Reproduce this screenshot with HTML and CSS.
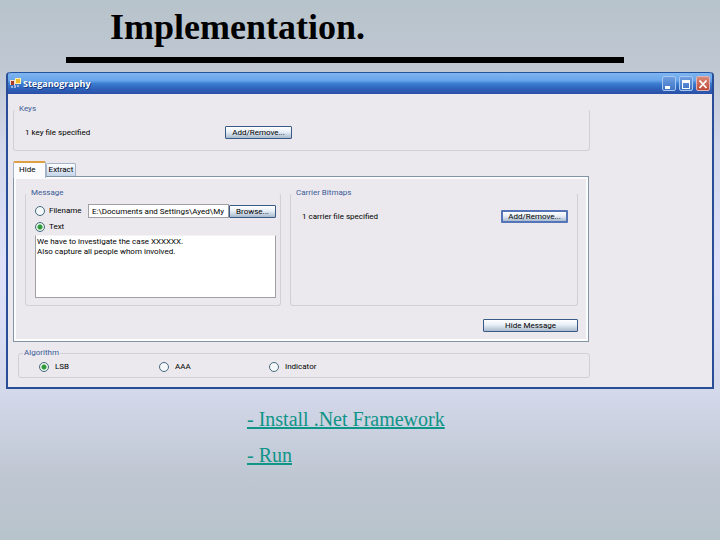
FILE: index.html
```
<!DOCTYPE html>
<html lang="en">
<head>
    <meta charset="UTF-8">
    <meta name="viewport" content="width=device-width, initial-scale=1.0">
    <title>Implementation</title>
    <link rel="stylesheet" href="styles.css">
</head>
<body>
    <header class="slide-header">
        <h1>Implementation.</h1>
        <hr class="rule">
    </header>

    <main>
        <section class="window">
            <div class="title-bar">
                <svg class="app-icon" viewBox="0 0 11 11" width="11" height="11" aria-hidden="true">
                    <rect x="0" y="2" width="5" height="5" fill="#f3d9d0"/>
                    <rect x="1" y="3" width="3" height="4" fill="#a83a2c"/>
                    <rect x="5" y="0" width="6" height="6" fill="#fff3b0"/>
                    <rect x="6" y="1" width="4" height="4" fill="#efb92e"/>
                    <path d="M1 8h2v2H1zM4 7h2v3H4zM7 7h2v2H7z" fill="#9fb4e0"/>
                </svg>
                <h2>Steganography</h2>
                <div class="window-buttons">
                    <button type="button" class="win-btn" aria-label="Minimize">
                        <svg viewBox="0 0 14 14" width="14" height="14"><path d="M3 9h5v3H3z" fill="#fff"/></svg>
                    </button>
                    <button type="button" class="win-btn" aria-label="Maximize">
                        <svg viewBox="0 0 14 14" width="14" height="14"><path fill-rule="evenodd" d="M3 3h8v9H3zM4 6v5h6V6z" fill="#fff"/></svg>
                    </button>
                    <button type="button" class="win-btn close-btn" aria-label="Close">
                        <svg viewBox="0 0 14 14" width="14" height="14"><path d="M3.500 3.500l7 7.500M10.500 3.500l-7 7.500" stroke="#fff" stroke-width="1.800" fill="none"/></svg>
                    </button>
                </div>
            </div>

            <form class="form">
                <fieldset class="group">
                    <legend>Keys</legend>
                    <div class="row keys">
                        <span>1 key file specified</span>
                        <button type="button" class="btn">Add/Remove...</button>
                    </div>
                </fieldset>

                <div class="tabs">
                    <button type="button" class="tab active">Hide</button>
                    <button type="button" class="tab">Extract</button>
                </div>

                <div class="panel">
                    <div class="columns">
                        <fieldset class="group">
                            <legend>Message</legend>
                            <div class="message">
                                <div class="file-row">
                                    <input type="radio" name="source" id="sourceFile">
                                    <label for="sourceFile">Filename</label>
                                    <input type="text" class="path" aria-label="Filename" value="E:\Documents and Settings\Ayed\My Documents">
                                    <button type="button" class="btn">Browse...</button>
                                </div>
                                <div class="text-row">
                                    <input type="radio" name="source" id="sourceText" checked>
                                    <label for="sourceText">Text</label>
                                </div>
                                <textarea class="text" aria-label="Message text">We have to investigate the case XXXXXX.
Also capture all people whom involved.</textarea>
                            </div>
                        </fieldset>

                        <fieldset class="group">
                            <legend>Carrier Bitmaps</legend>
                            <div class="row bitmaps">
                                <span>1 carrier file specified</span>
                                <button type="button" class="btn blue">Add/Remove...</button>
                            </div>
                        </fieldset>
                    </div>
                    <button type="button" class="btn hide-btn">Hide Message</button>
                </div>

                <fieldset class="group algorithm">
                    <legend>Algorithm</legend>
                    <div class="options">
                        <label><input type="radio" name="algorithm" checked>LSB</label>
                        <label><input type="radio" name="algorithm">AAA</label>
                        <label><input type="radio" name="algorithm">Indicator</label>
                    </div>
                </fieldset>
            </form>
        </section>

        <nav class="links">
            <a href="#install">- Install .Net Framework</a>
            <a href="#run">- Run</a>
        </nav>
    </main>
</body>
</html>
```

FILE: styles.css
```
* {
    margin: 0;
    padding: 0;
    box-sizing: border-box;
}

body {
    font-family: "Liberation Serif", "Times New Roman", serif;
    background: linear-gradient(#b7c3cb 0%, #bfc7d2 12%, #d3d8ea 27%, #dfe1fc 50%, #d3d8ea 73%, #bfc7d2 88%, #b7c3cb 100%);
    min-height: 100vh;
    padding: 6px;
}

.slide-header h1 {
    font-size: 36px;
    line-height: 42px;
    padding-left: 104px;
    color: #000;
}

.rule {
    height: 6px;
    margin: 9px 90px 9px 60px;
    border: none;
    background: #000;
}

/* XP style window */
.window {
    border: 2px solid #2a4d98;
    border-top: none;
    border-radius: 4px 4px 0 0;
    background: #ebe9ed;
    font-family: Roboto, "Liberation Sans", sans-serif;
    font-size: 8px;
    line-height: 10px;
    color: #000;
}

.title-bar {
    display: flex;
    align-items: center;
    height: 22px;
    padding: 0 2px;
    border-top: 1px solid #24529c;
    border-radius: 3px 3px 0 0;
    background: linear-gradient(#7fb6f2 0%, #69a5ea 35%, #3c7fd2 50%, #2f62bb 75%, #2a4fa6 100%);
}

.title-bar h2 {
    margin-left: 2px;
    font-family: "Open Sans", sans-serif;
    font-size: 9px;
    line-height: 12px;
    color: #fff;
    text-shadow: 1px 1px 0 #1b3a80;
}

.window-buttons {
    display: flex;
    gap: 3px;
    margin-left: auto;
}

.win-btn {
    width: 14px;
    height: 15px;
    border: 1px solid #a9c8f0;
    border-radius: 2px;
    background: linear-gradient(#6f9fe0, #3f74c6);
    display: flex;
    align-items: center;
    justify-content: center;
}

.win-btn svg {
    flex: none;
}

.close-btn {
    border-color: #e3b3b3;
    background: linear-gradient(#d98a78, #bf4b38);
}

.form {
    max-width: 582px;
    padding: 10px 0 9px 5px;
}

.group {
    min-width: 0;
    border: 1px solid #d0d0d6;
    border-top-color: transparent;
    border-radius: 3px;
}

.group legend {
    margin-left: 4px;
    padding: 0 1px;
    line-height: 10px;
    color: #3b5a97;
}

.row {
    display: flex;
    justify-content: space-between;
    align-items: center;
}

.keys {
    padding: 12px 297px 11px 11px;
}

.btn {
    height: 13px;
    padding: 0 5px;
    border: 1px solid #3a5a86;
    border-radius: 1px;
    background: linear-gradient(#fff 0%, #e6eef6 45%, #a9bace 100%);
    font: inherit;
    line-height: 11px;
    color: #000;
    white-space: nowrap;
}

.row .btn {
    width: 67px;
}

.btn.blue {
    border: 2px solid #5674b8;
    line-height: 9px;
}

.tabs {
    display: flex;
    align-items: flex-end;
    height: 15px;
    margin-top: 10px;
}

.tab {
    width: 30px;
    height: 13px;
    border: 1px solid #a3b3c8;
    border-bottom: none;
    border-radius: 2px 2px 0 0;
    background: linear-gradient(#fff, #c3d4ea);
    font: inherit;
    color: #000;
}

.tab.active {
    position: relative;
    width: 33px;
    height: 17px;
    margin-bottom: -2px;
    padding: 0 5px 2px;
    border-top: 2px solid #dfa044;
    background: #fcfcfe;
    text-align: left;
}

.panel {
    margin-right: 1px;
    padding: 11px 10px 9px 11px;
    border: 1px solid #8395a5;
    box-shadow: inset 0 0 0 2px #fcfcfe;
}

.columns {
    display: grid;
    grid-template-columns: 8fr 9fr;
    gap: 9px;
}

.message {
    padding: 6px 4px 7px 9px;
}

.file-row,
.text-row {
    display: flex;
    align-items: center;
}

.file-row label {
    width: 39px;
}

.file-row .btn {
    width: 47px;
}

.text-row {
    height: 10px;
    margin: 4px 0 3px;
}

input[type="radio"] {
    appearance: none;
    flex: none;
    width: 10px;
    height: 10px;
    margin-right: 4px;
    border: 1px solid #47697f;
    border-radius: 50%;
    background: #f4f8f8;
}

input[type="radio"]:checked {
    background: radial-gradient(circle, #2f9a3c 0 2px, #e6f3e6 3px);
}

.path {
    flex: 1;
    min-width: 0;
    height: 14px;
    padding: 0 3px;
    border: 1px solid #a0a0a4;
    background: #fff;
    font: inherit;
    color: #000;
}

.text {
    display: block;
    width: 100%;
    height: 63px;
    padding: 1px;
    border: 1px solid #a0a0a4;
    border-top-color: #f4f4f6;
    background: #fff;
    font: inherit;
    color: #000;
    resize: none;
}

.bitmaps {
    padding: 12px 9px 11px 11px;
}

.hide-btn {
    display: block;
    width: 95px;
    margin: 13px 0 0 auto;
}

.algorithm {
    margin: 6px 0 0 5px;
    border-top-color: #d0d0d6;
}

.options {
    display: grid;
    grid-template-columns: 120px 110px auto;
    padding: 4px 20px 5px;
}

.options label {
    display: flex;
    align-items: center;
}

.options input[type="radio"] {
    margin-right: 6px;
}

.links {
    display: flex;
    flex-direction: column;
    align-items: flex-start;
    gap: 12px;
    margin: 18px 0 0 241px;
}

.links a {
    font-size: 20px;
    line-height: 24px;
    color: #0f9488;
}
```
